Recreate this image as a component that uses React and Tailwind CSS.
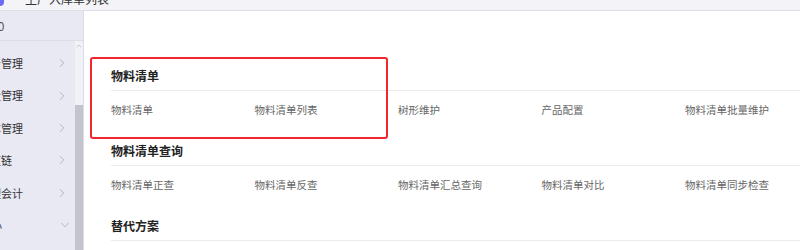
import { ChevronRight, ChevronDown, ChevronUp } from 'lucide-react';

const font = { fontFamily: '"Noto Sans CJK SC", "Noto Sans", sans-serif' };

const menu = [
    { label: '生产管理', shift: '-ml-[21px]', open: false },
    { label: '质量管理', shift: '-ml-[21px]', open: false },
    { label: '成本管理', shift: '-ml-[21px]', open: false },
    { label: '供应链', shift: '-ml-[21px]', open: false },
    { label: '管理会计', shift: '-ml-[21px]', open: false },
    { label: '报表中心', shift: '-ml-[42px]', open: true },
];

const sections = [
    { title: '物料清单', items: ['物料清单', '物料清单列表', '树形维护', '产品配置', '物料清单批量维护'] },
    { title: '物料清单查询', items: ['物料清单正查', '物料清单反查', '物料清单汇总查询', '物料清单对比', '物料清单同步检查'] },
    { title: '替代方案', items: ['替代方案', '替代方案列表', '批量替代', '替代关系查询', '替代方案维护'] },
];

export default function App() {
    return (
        <div className="w-[800px] h-[250px] overflow-hidden bg-white flex flex-col relative" style={font}>
            {/* top tab strip, cut off */}
            <div className="h-[11px] bg-[#f3f3f8] border-b border-[#dedee8] flex items-start overflow-hidden shrink-0">
                <div className="w-[4px] h-[6px] bg-[#6b6cf5] rounded-br-sm" />
                <span className="ml-[21px] -mt-[9px] text-[12px] leading-[16px] text-[#333]">生产入库单列表</span>
            </div>

            <div className="flex flex-1 min-h-0">
                {/* sidebar */}
                <aside className="w-[84px] bg-[#e9e9f3] border-r border-[#dcdce6] flex flex-col shrink-0 overflow-hidden">
                    <div className="h-[30px] border-b border-[#dcdce6] flex items-center overflow-hidden shrink-0">
                        <span className="-ml-[9px] text-[12px] text-[#555]">10</span>
                    </div>
                    <div className="flex flex-1 min-h-0">
                        <div className="flex-1 pt-[6px] overflow-hidden">
                            {menu.map((m) => (
                                <div key={m.label} className="h-[32.4px] flex items-center justify-between pr-[6px]">
                                    <span className={`text-[11px] text-[#333] whitespace-nowrap ${m.shift}`}>{m.label}</span>
                                    {m.open ? (
                                        <ChevronDown size={14} strokeWidth={1.3} className="text-[#a4a4ae] -mr-[3px]" />
                                    ) : (
                                        <ChevronRight size={14} strokeWidth={1.3} className="text-[#a4a4ae]" />
                                    )}
                                </div>
                            ))}
                        </div>
                        <div className="w-[8px] flex flex-col bg-[#f1f1f8]">
                            <div className="h-[10px] flex items-center justify-center">
                                <ChevronUp size={8} strokeWidth={2} className="text-[#b4b4bc]" />
                            </div>
                            <div className="h-[54px]" />
                            <div className="flex-1 bg-[#c3c5cd]" />
                        </div>
                    </div>
                </aside>

                {/* main */}
                <main className="flex-1 pl-[27px] pt-[51px] min-w-0">
                    {sections.map((s) => (
                        <div key={s.title} className="mb-[10px]">
                            <div className="h-[29px] flex items-center border-b border-[#ebebeb]">
                                <h3 className="text-[12px] font-bold text-[#222]">{s.title}</h3>
                            </div>
                            <div className="h-[36px] pt-[1px] flex items-center">
                                {s.items.map((it) => (
                                    <span key={it} className="w-[143.5px] shrink-0 text-[10.5px] text-[#666] whitespace-nowrap">{it}</span>
                                ))}
                            </div>
                        </div>
                    ))}
                </main>
            </div>

            {/* highlight annotation */}
            <div className="absolute left-[90px] top-[57px] w-[298px] h-[82px] border-2 border-[#f2262b] rounded-[3px] pointer-events-none" />
        </div>
    );
}
